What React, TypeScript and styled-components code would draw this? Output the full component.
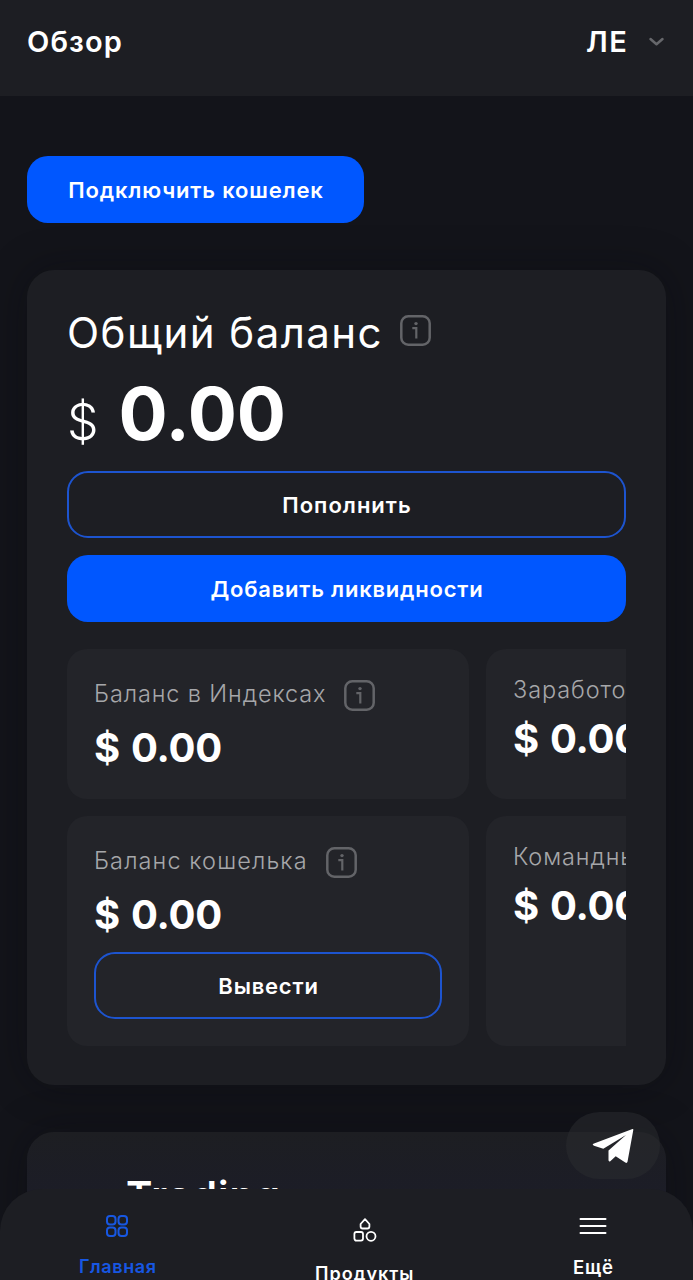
import React from "react";
import styled, { createGlobalStyle } from "styled-components";

const Global = createGlobalStyle`
  * { box-sizing: border-box; }
  html, body { margin: 0; background: #13141a; }
  body { font-family: Inter, "Noto Sans", sans-serif; color: #fff; overflow: hidden; }
  h1, h2, p { margin: 0; font-weight: inherit; }
  button { font: inherit; color: inherit; background: none; border: 0; padding: 0; }
  svg { flex: none; }
`;

const Page = styled.div`
  position: relative;
  width: 693px;
  height: 1280px;
  overflow: hidden;
  display: flex;
  flex-direction: column;
`;

const Header = styled.header`
  flex: none;
  height: 96px;
  padding: 0 28px 12px 27px;
  display: flex;
  align-items: center;
  justify-content: space-between;
  background: #1d1e23;
`;

const Label = styled.span<{ $size: number; $track?: number; $weight?: number; $lh?: number }>`
  display: block;
  white-space: nowrap;
  font-size: ${(p) => p.$size}px;
  line-height: ${(p) => p.$lh ?? Math.round(p.$size * 1.2)}px;
  letter-spacing: ${(p) => p.$track ?? 0}px;
  font-weight: ${(p) => p.$weight ?? 400};
`;

const Language = styled.button`
  display: flex;
  align-items: center;
  gap: 20px;
`;

const Main = styled.main`
  flex: none;
  padding: 60px 27px 0;
  display: flex;
  flex-direction: column;
  align-items: flex-start;
`;

const Button = styled.button<{ $outline?: boolean; $width?: string }>`
  display: flex;
  align-items: center;
  justify-content: center;
  flex: none;
  width: ${(p) => p.$width ?? "100%"};
  height: 67px;
  padding-left: 1px;
  border-radius: 21px;
  background: ${(p) => (p.$outline ? "transparent" : "#0057ff")};
  border: ${(p) => (p.$outline ? "2px solid #1d54cf" : "0")};
`;

const Card = styled.section`
  width: 639px;
  border-radius: 27px;
  background: #1d1e23;
  box-shadow: 0 0 40px rgba(8, 8, 14, 0.35);
`;

const BalanceCard = styled(Card)`
  height: 815px;
  margin-top: 47px;
  padding: 38px 40px 0;
`;

const TitleRow = styled.div`
  display: flex;
  align-items: flex-start;
  gap: 17px;
  height: 62px;
`;

const InfoSvg = styled.svg<{ $top: number }>`
  display: block;
  flex: none;
  margin-top: ${(p) => p.$top}px;
`;

const Amount = styled.div`
  display: flex;
  align-items: baseline;
  gap: 20px;
  height: 101px;
`;

const Actions = styled.div`
  display: flex;
  flex-direction: column;
  gap: 17px;
`;

const Tiles = styled.div`
  margin-top: 27px;
  display: grid;
  grid-template-columns: 402px 402px;
  grid-template-rows: 150px 230px;
  gap: 17px;
  overflow: hidden;
`;

const Tile = styled.div`
  border-radius: 20px;
  background: #232429;
  padding: 26px 27px;
`;

const TileHead = styled.div<{ $tall?: boolean }>`
  display: flex;
  align-items: ${(p) => (p.$tall ? "center" : "flex-end")};
  gap: 18px;
  height: ${(p) => (p.$tall ? 37 : 29)}px;
  margin-bottom: ${(p) => (p.$tall ? 11 : 10)}px;
  color: #a6a7aa;
`;

const TileValue = styled.div`
  height: 50px;
  margin-bottom: 12px;
  display: flex;
  align-items: center;
  word-spacing: 2px;
`;

const TradingCard = styled(Card)`
  height: 300px;
  margin-top: 47px;
  padding: 40px 99px;
  background: linear-gradient(#1d1e22, #1c1d27 60px);
`;

const Chat = styled.button`
  position: absolute;
  left: 566px;
  top: 1112px;
  width: 94px;
  height: 67px;
  border-radius: 34px;
  background: rgba(42, 43, 47, 0.55);
  display: flex;
  align-items: center;
  justify-content: center;
`;

const Nav = styled.nav`
  position: absolute;
  left: 0;
  right: 0;
  bottom: 0;
  height: 91px;
  border-radius: 42px 42px 0 0;
  background: #1d1e23;
  display: flex;
  justify-content: space-between;
  padding: 0 79px;
  overflow: hidden;
`;

const NavItem = styled.a<{ $active?: boolean; $drop?: number }>`
  display: flex;
  flex-direction: column;
  align-items: center;
  gap: ${(p) => (p.$drop ? 21 : 18)}px;
  padding-top: ${(p) => 25 + (p.$drop ?? 0)}px;
  color: ${(p) => (p.$active ? "#1757e2" : "#fff")};
`;

const InfoIcon = ({ top }: { top: number }) => (
  <InfoSvg $top={top} width="31" height="31" viewBox="0 0 31 31" fill="none" stroke="#636468">
    <rect x="1.3" y="1.3" width="28.4" height="28.4" rx="7" strokeWidth="2.5" />
    <path d="M12.3 13.2h4v10.3" strokeWidth="2.2" />
    <circle cx="16" cy="8.600" r="1.7" fill="#636468" stroke="none" />
  </InfoSvg>
);

interface TileProps {
  title: string;
  track: number;
  info?: boolean;
  children?: React.ReactNode;
}

const BalanceTile = ({ title, track, info, children }: TileProps) => (
  <Tile>
    <TileHead $tall={info}>
      <Label $size={23.5} $track={track} $weight={300} $lh={28}>{title}</Label>
      {info && <InfoIcon top={3} />}
    </TileHead>
    <TileValue>
      <Label $size={40} $track={-0.3} $weight={700}>$ 0.00</Label>
    </TileValue>
    {children}
  </Tile>
);

export default function App() {
  return (
    <Page>
      <Global />
      <Header>
        <Label as="h1" $size={29} $weight={600} $track={1.1} $lh={32}>Обзор</Label>
        <Language>
          <Label $size={29} $weight={600} $track={1.3} $lh={34}>ЛЕ</Label>
          <svg width="17" height="10" viewBox="0 0 17 10" fill="none" stroke="#66676b" strokeWidth="2.5" strokeLinecap="round" strokeLinejoin="round">
            <path d="M2.500 2l6 5.300L14.500 2" />
          </svg>
        </Language>
      </Header>
      <Main>
        <Button $width="337px"><Label $size={22} $weight={600} $track={0.83}>Подключить кошелек</Label></Button>
        <BalanceCard>
          <TitleRow>
            <Label as="h2" $size={42} $track={1.45} $lh={50}>Общий баланс</Label>
            <InfoIcon top={7} />
          </TitleRow>
          <Amount>
            <Label $size={50} $weight={300}>$</Label>
            <Label $size={73} $weight={700} $track={-0.1}>0.00</Label>
          </Amount>
          <Actions>
            <Button $outline><Label $size={22} $weight={600} $track={1}>Пополнить</Label></Button>
            <Button><Label $size={22} $weight={600} $track={0.78}>Добавить ликвидности</Label></Button>
          </Actions>
          <Tiles>
            <BalanceTile title="Баланс в Индексах" info track={0.88} />
            <BalanceTile title="Заработок" track={0.9} />
            <BalanceTile title="Баланс кошелька" info track={1.1}>
              <Button $outline><Label $size={22} $weight={600} $track={0.8}>Вывести</Label></Button>
            </BalanceTile>
            <BalanceTile title="Командный" track={0.9} />
          </Tiles>
        </BalanceCard>
        <TradingCard>
          <Label as="h2" $size={40} $weight={600} $lh={48} $track={1.1}>Trading</Label>
        </TradingCard>
      </Main>
      <Chat aria-label="Telegram">
        <svg width="42" height="36" viewBox="0 0 42 36" fill="#fff">
          <path d="M40.5 1Q41.5.7 41.3 2L35.5 33.8Q35 35.6 33.3 34.6L23.7 28.2 18.3 33.2Q16.5 34 16.5 32V22.5L34 7 11.3 20.7 2 17.7Q-.6 16.6 2 15.4Z" />
        </svg>
      </Chat>
      <Nav>
        <NavItem $active>
          <svg width="24" height="24" viewBox="0 0 24 24" fill="none" stroke="currentColor" strokeWidth="2">
            <rect x="1" y="2" width="8.5" height="8.5" rx="3" />
            <rect x="12.5" y="2" width="8.5" height="8.5" rx="3" />
            <rect x="1" y="13.5" width="8.5" height="8.5" rx="3" />
            <rect x="12.5" y="13.5" width="8.5" height="8.5" rx="3" />
          </svg>
          <Label $size={18} $weight={600} $track={0.6}>Главная</Label>
        </NavItem>
        <NavItem $drop={4}>
          <svg width="24" height="24" viewBox="0 0 24 24" fill="none" stroke="currentColor" strokeWidth="1.8">
            <path d="M12 1.2L16.4 6v2.5q0 2-2 2H9.600q-2 0-2-2V6Z" strokeLinejoin="round" />
            <rect x="1.400" y="14" width="8.600" height="8.600" rx="2" />
            <circle cx="18" cy="18.300" r="4.500" />
          </svg>
          <Label $size={18} $weight={600} $track={1}>Продукты</Label>
        </NavItem>
        <NavItem>
          <svg width="28" height="24" viewBox="0 0 28 24" stroke="currentColor" strokeWidth="2" strokeLinecap="round">
            <path d="M1.500 5h25M1.500 12h25M1.500 19h25" />
          </svg>
          <Label $size={18.5} $weight={600} $track={1}>Ещё</Label>
        </NavItem>
      </Nav>
    </Page>
  );
}
